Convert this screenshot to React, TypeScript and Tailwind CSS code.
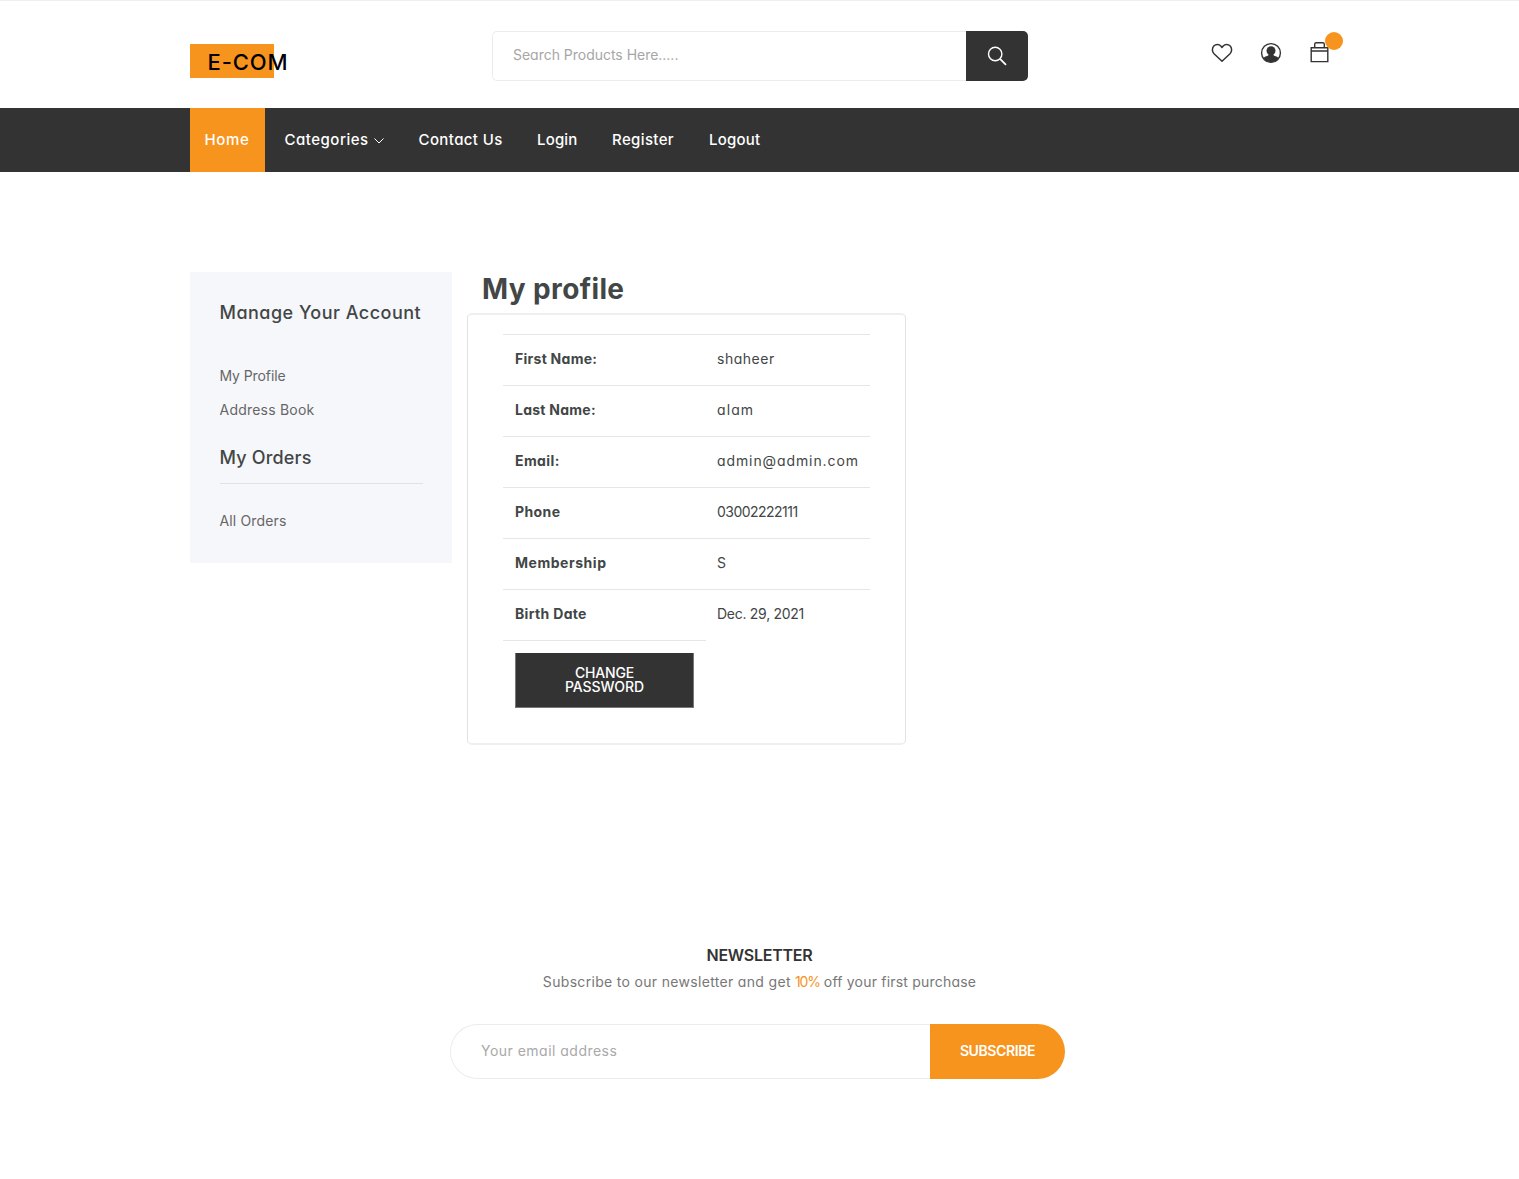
import React from "react";

const navItems = [
  { label: "Contact Us", cls: "w-[118.5px] tracking-[0.4px]" },
  { label: "Login", cls: "w-[75px] tracking-[0.17px]" },
  { label: "Register", cls: "w-[97px] tracking-[0.37px]" },
  { label: "Logout", cls: "tracking-[0.2px]" },
];

const profileRows = [
  { label: "First Name:", labelCls: "tracking-[0.27px]", value: "shaheer", valueCls: "tracking-[0.51px]" },
  { label: "Last Name:", labelCls: "tracking-[0.25px]", value: "alam", valueCls: "tracking-[1.1px]" },
  { label: "Email:", labelCls: "tracking-[0.4px]", value: "admin@admin.com", valueCls: "tracking-[0.9px]" },
  { label: "Phone", labelCls: "tracking-[0.41px]", value: "03002222111", valueCls: "tracking-[-0.53px]" },
  { label: "Membership", labelCls: "tracking-[0.53px]", value: "S", valueCls: "" },
  { label: "Birth Date", labelCls: "tracking-[0.33px]", value: "Dec. 29, 2021", valueCls: "tracking-[-0.28px]" },
];

function SearchIcon() {
  return (
    <svg width="20" height="20" viewBox="0 0 20 20" fill="none" stroke="white" strokeWidth="1.4">
      <circle cx="8.200" cy="8" r="6.700" />
      <path d="M13 12.800 19 18.800" strokeWidth="1.800" />
    </svg>
  );
}

function HeartIcon() {
  return (
    <svg width="22" height="20" viewBox="0 0 22 20" fill="none" stroke="#333333" strokeWidth="1.5" strokeLinejoin="round">
      <path d="M11 18.200 3 10.700C.9 8.600.9 5.200 2.800 3.100 4.800 1 8 1 9.800 3L11 4.500 12.200 3C14 1 17.200 1 19.200 3.100 21.100 5.200 21.100 8.600 19 10.700Z" />
    </svg>
  );
}

function UserIcon() {
  return (
    <svg width="22" height="22" viewBox="0 0 22 22" fill="none">
      <circle cx="11" cy="11" r="9.400" stroke="#333333" strokeWidth="1.400" />
      <circle cx="11" cy="8.800" r="4.500" fill="#333333" />
      <path
        fill="#333333"
        d="M8.800 12h4.400c.2 1.400 1 1.900 2.500 2.200 1.300.3 2.200.8 2.800 1.900C17 18.900 14.200 20.500 11 20.500S5 18.900 3.500 16.100c.6-1.100 1.500-1.600 2.800-1.900 1.500-.3 2.300-.8 2.500-2.200Z"
      />
    </svg>
  );
}

function BagIcon() {
  return (
    <svg width="20" height="22" viewBox="0 0 20 22" fill="none" stroke="#333333" strokeWidth="1.4">
      <path d="M1.200 6.700h16.600v13.900H1.200ZM1.200 10h16.600M4.700 6.700V3.200q0-1.500 1.500-1.500h6.600q1.500 0 1.500 1.500v3.500" />
    </svg>
  );
}

function Header() {
  return (
    <header className="h-[108px] border-t border-[#efefef]">
      <div className="mx-auto flex w-[1139px] items-start">
        <div className="mt-[43px] flex h-[34px] w-[84px] items-center bg-[#f7941d] pl-[17.5px]">
          <span className="pt-px text-[22px] leading-none font-medium whitespace-nowrap text-black tracking-[0.9px]">E-COM</span>
        </div>
        <div className="mt-[30px] ml-[218px] flex h-[50px] w-[536px]">
          <input
            className="w-[474px] rounded-l-[5px] border border-r-0 border-[#ececec] bg-white px-5 pb-0.5 text-sm tracking-[-0.02px] outline-none placeholder:text-[#a6a6a6]"
            placeholder="Search Products Here....."
          />
          <button className="flex w-[62px] items-center justify-center rounded-r-[5px] bg-[#333333]">
            <SearchIcon />
          </button>
        </div>
        <div className="mt-[41px] ml-[183px] flex">
          <div className="mt-px w-[49px]"><HeartIcon /></div>
          <div className="w-[50px]"><UserIcon /></div>
          <div className="relative -mt-1.5 pt-[5px]">
            <BagIcon />
            <span className="absolute -top-1 left-[15px] size-[18px] rounded-full bg-[#f7941d]" />
          </div>
        </div>
      </div>
    </header>
  );
}

function Nav() {
  return (
    <nav className="h-16 bg-[#333333] text-[15px] font-medium text-white">
      <div className="mx-auto flex h-full w-[1139px] items-center">
        <a className="flex h-full w-[75px] items-center bg-[#f7941d] pl-[14.5px] tracking-[0.66px]">Home</a>
        <a className="ml-[19.5px] flex w-[134px] items-center tracking-[0.5px]">
          Categories
          <svg className="mt-0.5 ml-[5px]" width="10" height="6" viewBox="0 0 10 6" fill="none" stroke="white">
            <path d="m.5.5 4.500 4.500L9.500.5" />
          </svg>
        </a>
        {navItems.map((item) => (
          <a key={item.label} className={item.cls}>{item.label}</a>
        ))}
      </div>
    </nav>
  );
}

function Sidebar() {
  return (
    <aside className="h-[291px] w-[262px] bg-[#f6f7fb] px-[29.5px] pt-[29px]">
      <h5 className="text-lg leading-6 font-medium whitespace-nowrap text-[#424646] tracking-[0.48px]">Manage Your Account</h5>
      <ul className="pt-[39px] text-sm leading-6 text-[#666666]">
        <li className="tracking-[-0.1px]">My Profile</li>
        <li className="mt-2.5 tracking-[0.22px]">Address Book</li>
      </ul>
      <h5 className="mt-6 border-b border-[#dfe2e6] pb-[13px] text-lg leading-6 font-medium text-[#424646] tracking-[0.17px]">My Orders</h5>
      <p className="mt-[25px] text-sm leading-6 text-[#666666] tracking-[0.15px]">All Orders</p>
    </aside>
  );
}

function Profile() {
  return (
    <section className="ml-[15px] w-[439px] text-[#424646]">
      <h2 className="pl-[15px] text-[28px] leading-[35px] font-bold tracking-[0.38px]">My profile</h2>
      <div className="mt-1.5 h-[432px] rounded-[5px] border-x border-y-2 border-x-[#e2e2e2] border-y-[#efefef] px-[35px] pt-[19px]">
        <table className="w-[367px] table-fixed border-collapse text-sm">
          <tbody>
            {profileRows.map((row) => (
              <tr key={row.label} className="h-[51px] border-t border-[#e4e6e9]">
                <td className={"w-[203px] pb-0.5 pl-3 font-bold " + row.labelCls}>{row.label}</td>
                <td className={"pb-0.5 pl-[11px] whitespace-nowrap " + row.valueCls}>{row.value}</td>
              </tr>
            ))}
            <tr>
              <td className="border-t border-[#e4e6e9] px-3 pt-3">
                <button className="h-[55px] w-full border border-t-0 border-[#777777] bg-[#333333] text-sm leading-[14px] font-medium text-white">
                  <span className="tracking-[-0.19px]">CHANGE</span>
                  <br />
                  <span className="tracking-[-0.09px]">PASSWORD</span>
                </button>
              </td>
              <td />
            </tr>
          </tbody>
        </table>
      </div>
    </section>
  );
}

function Newsletter() {
  return (
    <section className="mt-[200px] flex flex-col items-center">
      <h4 className="text-base leading-5 font-semibold text-[#333333] tracking-[-0.25px]">NEWSLETTER</h4>
      <p className="mt-[5px] text-sm leading-6 text-[#777777]">
        <span className="tracking-[0.32px]">Subscribe to our newsletter and get </span>
        <span className="text-[#f7941d] tracking-[-1.2px]">10%</span>
        <span className="tracking-[0.2px]"> off your first purchase</span>
      </p>
      <form className="mt-[30px] mr-1 flex h-[55px] w-[615px]">
        <input
          className="w-[480px] rounded-l-[28px] border border-r-0 border-[#ececec] pr-4 pb-0.5 pl-[30px] text-sm tracking-[0.48px] outline-none placeholder:text-[#a9a9a9]"
          placeholder="Your email address"
        />
        <button type="button" className="w-[135px] rounded-r-[28px] bg-[#f7941d] pb-0.5 text-sm font-semibold text-white tracking-[-0.4px]">
          SUBSCRIBE
        </button>
      </form>
    </section>
  );
}

export default function App() {
  return (
    <div className="h-[1179px] overflow-hidden bg-white font-['Inter',sans-serif] [font-feature-settings:'cv11']">
      <Header />
      <Nav />
      <main className="mx-auto mt-[100px] flex w-[1139px] items-start">
        <Sidebar />
        <Profile />
      </main>
      <Newsletter />
    </div>
  );
}
